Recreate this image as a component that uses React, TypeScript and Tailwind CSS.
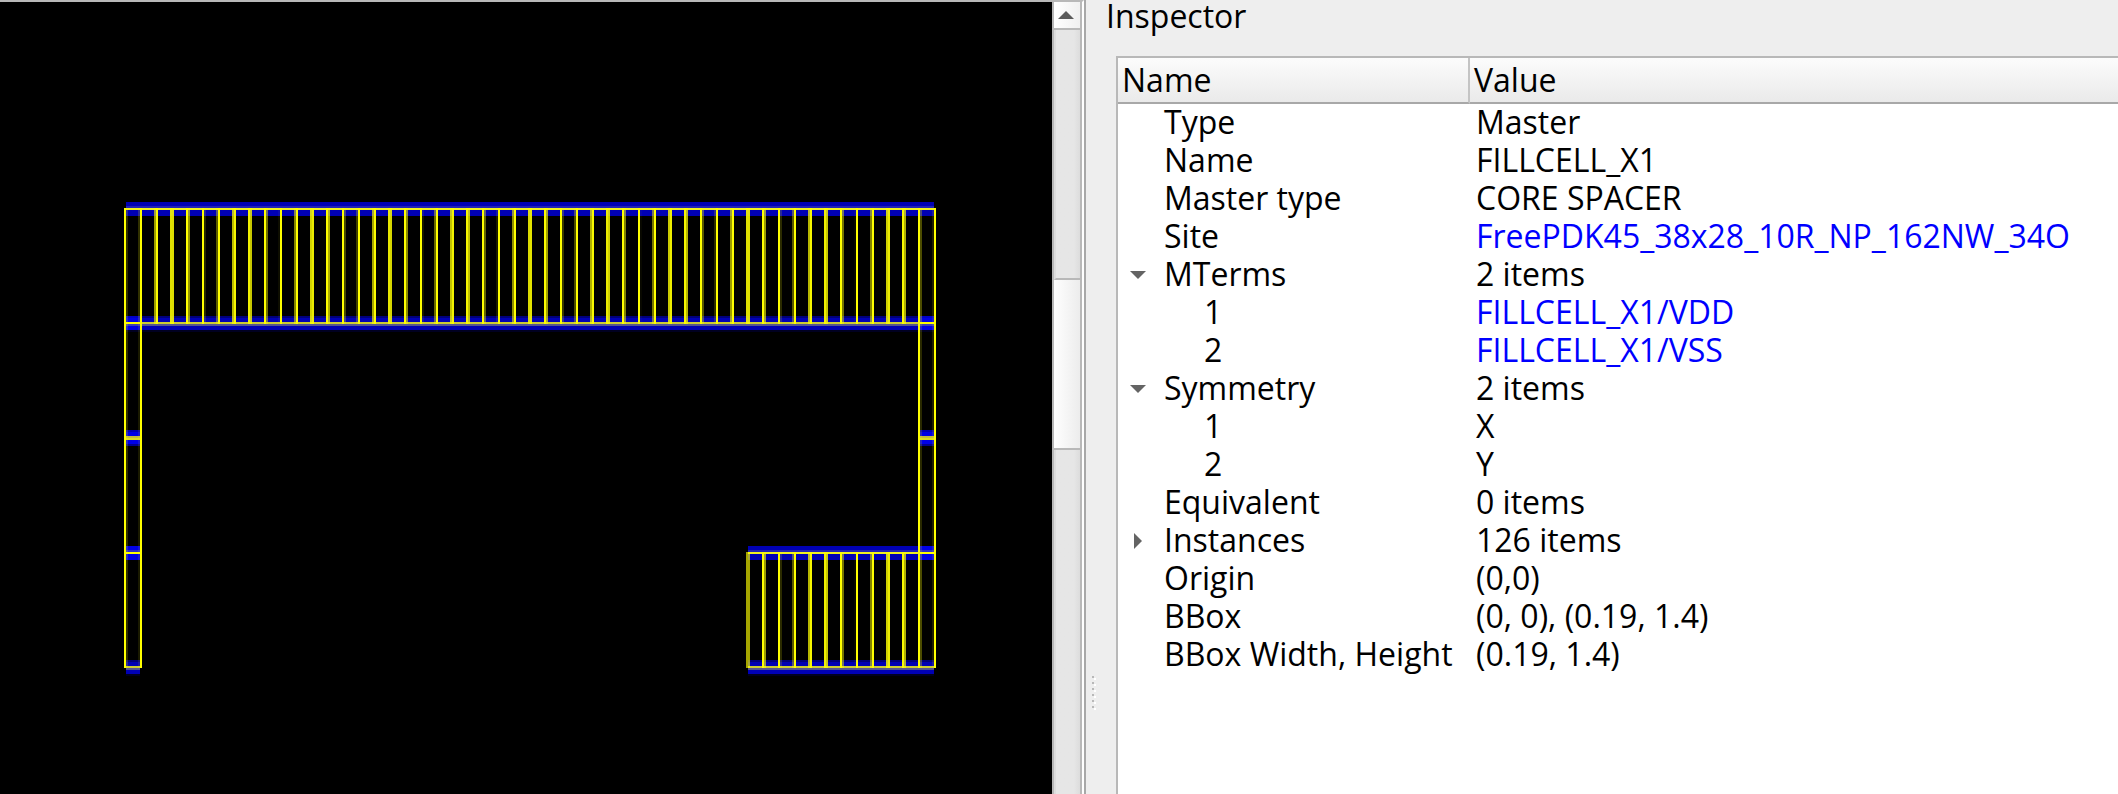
import { useState } from "react";

type Item = {
  name: string;
  value: string;
  link?: boolean;
  expandable?: boolean;
  children?: Item[];
};

const items: Item[] = [
  { name: "Type", value: "Master" },
  { name: "Name", value: "FILLCELL_X1" },
  { name: "Master type", value: "CORE SPACER" },
  { name: "Site", value: "FreePDK45_38x28_10R_NP_162NW_34O", link: true },
  {
    name: "MTerms",
    value: "2 items",
    expandable: true,
    children: [
      { name: "1", value: "FILLCELL_X1/VDD", link: true },
      { name: "2", value: "FILLCELL_X1/VSS", link: true },
    ],
  },
  {
    name: "Symmetry",
    value: "2 items",
    expandable: true,
    children: [
      { name: "1", value: "X" },
      { name: "2", value: "Y" },
    ],
  },
  { name: "Equivalent", value: "0 items" },
  { name: "Instances", value: "126 items", expandable: true },
  { name: "Origin", value: "(0,0)" },
  { name: "BBox", value: "(0, 0), (0.19, 1.4)" },
  { name: "BBox Width, Height", value: "(0.19, 1.4)" },
];

/* Cell placement, in layout units. */
const FIRST = 62.14;
const PITCH = 7.784;
const COLUMNS = 52;
const edge = (i: number) => FIRST + i * PITCH;

/* A vertical cell edge split over the two units that it covers.
   Neighbouring cells both draw the edge between them. */
function Edge({ i, top, bottom, shared }: { i: number; top: number; bottom: number; shared: boolean }) {
  const left = Math.floor(edge(i));
  const spill = edge(i) - left;
  const strength = (a: number) => {
    const once = Math.min(1, a * 1.3);
    return shared ? 1 - (1 - once) * (1 - once) : once;
  };
  return (
    <g fill="#ffff00">
      <rect x={left} y={top} width={1} height={bottom - top} opacity={strength(1 - spill)} />
      <rect x={left + 1} y={top} width={1} height={bottom - top} opacity={strength(spill)} />
    </g>
  );
}

type Stripe = [offset: number, height: number, color: string];

const topStripes: Stripe[] = [
  [0, 2, "#0000b4"],
  [2, 1, "#2222b4"],
  [3, 1, "#f0f020"],
  [4, 3, "#0000b4"],
];
const lowerStripes: Stripe[] = [
  [0, 1, "#00007a"],
  [1, 2, "#0000b4"],
  [3, 1, "#cccc33"],
  [4, 1, "#555590"],
  [5, 2, "#0000b4"],
  [7, 1, "#000020"],
];
const brightTop: Stripe[] = [
  [0, 2, "#0000e6"],
  [2, 1, "#2c2cc8"],
  [3, 1, "#ffff00"],
  [4, 3, "#0000e6"],
];
const brightLower: Stripe[] = [
  [0, 1, "#0000c8"],
  [1, 2, "#0000e6"],
  [3, 1, "#ffff00"],
  [4, 1, "#4040b4"],
  [5, 2, "#0000e6"],
];
const brightMiddle: Stripe[] = [
  [0, 1, "#0000b4"],
  [1, 2, "#0000e6"],
  [3, 1, "#c4bd3c"],
  [4, 1, "#dcdc20"],
  [5, 2, "#0000e6"],
  [7, 1, "#000090"],
];

function Rail({ from, to, y, stripes }: { from: number; to: number; y: number; stripes: Stripe[] }) {
  const x1 = Math.floor(edge(from)) + 1;
  const x2 = Math.round(edge(to));
  return (
    <g>
      {stripes.map(([dy, h, color]) => (
        <rect key={dy} x={x1} y={y + dy} width={x2 - x1} height={h} fill={color} />
      ))}
    </g>
  );
}

function LayoutView() {
  const all = Array.from({ length: COLUMNS + 1 }, (_, i) => i);
  return (
    <svg viewBox="0 1 526 396" className="block h-auto w-full" shapeRendering="crispEdges" role="img" aria-label="Cell layout">
      <Rail from={0} to={COLUMNS} y={101} stripes={topStripes} />
      <Rail from={0} to={COLUMNS} y={158} stripes={lowerStripes} />
      <Rail from={0} to={1} y={158} stripes={brightLower} />
      <Rail from={COLUMNS - 1} to={COLUMNS} y={158} stripes={brightLower} />
      <Rail from={0} to={1} y={215} stripes={brightMiddle} />
      <Rail from={COLUMNS - 1} to={COLUMNS} y={215} stripes={brightMiddle} />
      <Rail from={0} to={1} y={273} stripes={brightTop} />
      <Rail from={COLUMNS - 12} to={COLUMNS} y={273} stripes={topStripes} />
      <Rail from={COLUMNS - 1} to={COLUMNS} y={273} stripes={brightTop} />
      <Rail from={0} to={1} y={330} stripes={lowerStripes} />
      <Rail from={COLUMNS - 12} to={COLUMNS} y={330} stripes={lowerStripes} />

      {all.map((i) => (
        <Edge key={i} i={i} top={104} bottom={162} shared={i > 0 && i < COLUMNS} />
      ))}
      <Edge i={0} top={162} bottom={334} shared={false} />
      <Edge i={1} top={162} bottom={334} shared={false} />
      <Edge i={COLUMNS - 1} top={162} bottom={276} shared={false} />
      <Edge i={COLUMNS} top={162} bottom={276} shared={false} />
      {all.slice(COLUMNS - 12).map((i) => (
        <Edge key={i} i={i} top={276} bottom={334} shared={i > COLUMNS - 12 && i < COLUMNS} />
      ))}
    </svg>
  );
}

function ScrollBar() {
  return (
    <div className="flex w-[30px] shrink-0 flex-col border-x-2 border-[#b8b8b8] bg-[#e4e4e4]">
      <button
        type="button"
        aria-label="Scroll up"
        className="flex h-7 items-center justify-center border-b-2 border-[#b8b8b8] bg-linear-to-r from-white to-[#f0f0f0] pr-[2px]"
      >
        <svg width="16" height="8" viewBox="0 0 8 4" aria-hidden="true">
          <path d="M4 0 8 4H0Z" fill="#5c5c5c" />
        </svg>
      </button>
      <div className="h-[250px] border-b-2 border-l-2 border-b-[#b8b8b8] border-l-[#dcdcdc] bg-linear-to-r from-[#e6e6e6] from-75% to-[#dcdcdc]" />
      <div className="h-[170px] border-b-2 border-[#b8b8b8] bg-linear-to-r from-white to-[#ececec]" />
      <div className="flex-1 border-l-2 border-[#dcdcdc] bg-linear-to-r from-[#e6e6e6] from-75% to-[#dcdcdc]" />
    </div>
  );
}

function Splitter() {
  return (
    <div className="flex w-8 shrink-0 flex-col gap-1 border-l-2 border-[#a8a8a8] pt-[676px] pl-[6px]">
      {[0, 1, 2, 3, 4, 5].map((n) => (
        <span key={n} className="size-[2px] bg-[#b8b8b8] shadow-[2px_2px_0_#ffffff]" />
      ))}
    </div>
  );
}

function Row({ item, depth, open, onToggle }: { item: Item; depth: number; open?: boolean; onToggle?: () => void }) {
  return (
    <tr>
      <td className="p-0">
        <div className={depth === 0 ? "flex items-center" : "flex items-center pl-10"}>
          <span className="flex w-[46px] shrink-0 justify-center pr-[6px]">
            {item.expandable && (
              <button
                type="button"
                aria-label={item.name}
                aria-expanded={!!open}
                onClick={onToggle}
                className="flex size-5 items-center justify-center"
              >
                {open ? (
                  <svg width="16" height="8" viewBox="0 0 16 8" aria-hidden="true">
                    <path d="M0 0H16L8 8Z" fill="#646464" />
                  </svg>
                ) : (
                  <svg width="8" height="16" viewBox="0 0 8 16" aria-hidden="true">
                    <path d="M0 0V16L8 8Z" fill="#646464" />
                  </svg>
                )}
              </button>
            )}
          </span>
          <span className="pb-[2px] leading-9">{item.name}</span>
        </div>
      </td>
      <td className="p-0 pb-[2px] pl-[6px] leading-9">
        {item.link ? (
          <a href="#" className="text-[#0000ff]">
            {item.value}
          </a>
        ) : (
          item.value
        )}
      </td>
    </tr>
  );
}

function Inspector() {
  const [open, setOpen] = useState<Record<string, boolean>>({ MTerms: true, Symmetry: true });
  return (
    <section className="flex min-w-0 flex-1 flex-col">
      <h2 className="-ml-[10px] h-14 leading-8">Inspector</h2>
      <div className="flex-1 overflow-hidden border-t-2 border-l-2 border-[#b8b8b8] bg-white">
        <table className="w-full table-fixed border-separate border-spacing-0 text-left whitespace-nowrap">
          <thead>
            <tr className="bg-linear-to-b from-[#fcfcfc] to-[#e9e9e9]">
              <th className="w-[352px] border-r-2 border-b-2 border-r-[#c4c4c4] border-b-[#a8a8a8] p-0 pl-1 leading-11 font-normal">
                Name
              </th>
              <th className="border-b-2 border-[#a8a8a8] p-0 pl-1 leading-11 font-normal">Value</th>
            </tr>
          </thead>
          <tbody>
            {items.flatMap((item) => [
              <Row
                key={item.name}
                item={item}
                depth={0}
                open={open[item.name]}
                onToggle={() => setOpen({ ...open, [item.name]: !open[item.name] })}
              />,
              ...(open[item.name] ? item.children ?? [] : []).map((child) => (
                <Row key={item.name + child.name} item={child} depth={1} />
              )),
            ])}
          </tbody>
        </table>
      </div>
    </section>
  );
}

export default function App() {
  return (
    <div className="grid min-h-screen grid-cols-[minmax(0,1084fr)_minmax(0,1034fr)] bg-[#eeeeee] font-['Open_Sans',sans-serif] text-[32px] text-black">
      <div className="flex border-t-2 border-r-2 border-t-[#b8b8b8] border-r-white">
        <main className="min-w-0 flex-1 overflow-hidden bg-black">
          <LayoutView />
        </main>
        <ScrollBar />
      </div>
      <div className="flex min-w-0">
        <Splitter />
        <Inspector />
      </div>
    </div>
  );
}
